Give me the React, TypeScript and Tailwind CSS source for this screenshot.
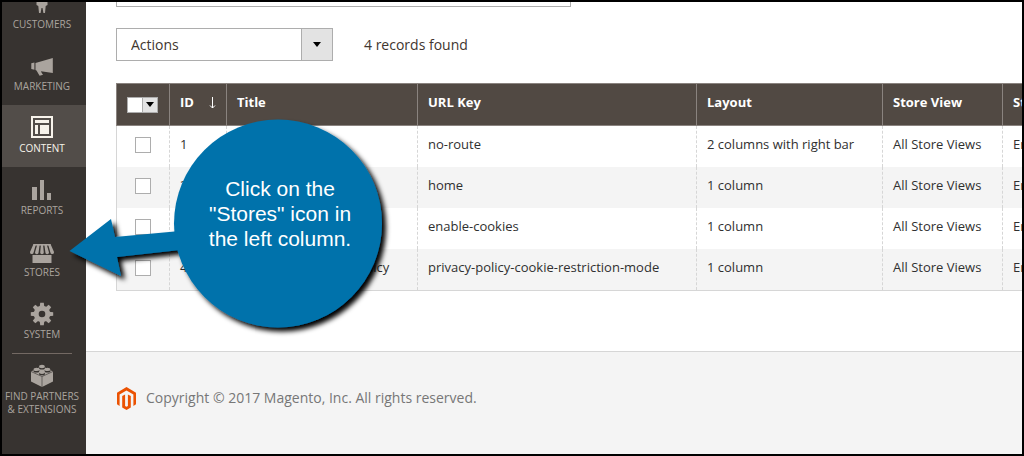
import { FC, ReactNode } from 'react';

type MenuItem = {
  label: ReactNode;
  id: string;
  icon: ReactNode;
  active?: boolean;
};

type Page = {
  id: number;
  title: string;
  urlKey: string;
  layout: string;
};

const GEAR_TEETH = [0, 45, 90, 135, 180, 225, 270, 315];

const MENU: MenuItem[] = [
  {
    id: 'marketing',
    label: 'MARKETING',
    icon: <path d="M21.800 4v15L10 17.300l.5 1.200 1.500 2.300-3.400.9L5.500 16.500 4.500 16V9zM.3 9.300L3.400 8.600v7.200L.3 15z" />,
  },
  {
    id: 'content',
    label: 'CONTENT',
    active: true,
    icon: (
      <path
        fillRule="evenodd"
        d="M0 0h22v22H0zM2 2v18h18V2zM4 4h14v3H4zM4 9h3v9H4zM9 9h9v9H9z"
      />
    ),
  },
  {
    id: 'reports',
    label: 'REPORTS',
    icon: <path d="M1 9h5v13H1zM9 2h4v20H9zM16 15h4v7h-4z" />,
  },
  {
    id: 'stores',
    label: 'STORES',
    icon: (
      <>
        <path d="M2.500 4h17v1.600h-17z" />
        <path d="M2.500 4H5L2.600 12.500a1.800 1.800 0 0 1-3.600-.6zM6.400 4h2.300L7.600 12.500a1.800 1.800 0 0 1-3.600 0zM10 4h2l.8 8.500a1.800 1.800 0 0 1-3.600 0zM13.300 4h2.300L18 12.500a1.800 1.800 0 0 1-3.600 0zM17 4h2.500L23 11.900a1.800 1.800 0 0 1-3.600.6z" />
        <path d="M1.500 15h19v8h-19z" />
      </>
    ),
  },
  {
    id: 'system',
    label: 'SYSTEM',
    icon: (
      <>
        <circle cx="11" cy="12" r="5.800" fill="none" stroke="currentColor" strokeWidth="5" />
        {GEAR_TEETH.map(angle => (
          <path key={angle} d="M8.700 5l.5-4.200h3.600l.5 4.200z" transform={`rotate(${angle} 11 12)`} />
        ))}
      </>
    ),
  },
  {
    id: 'partners',
    label: (
      <>
        FIND PARTNERS
        <br />
        &amp; EXTENSIONS
      </>
    ),
    icon: (
      <>
        <path d="M0 7.500L11 2l11 5.500v10L11 23 0 17.500z" />
        <path d="M0 7.500l11 5 11-5M11 12.500V23" fill="none" stroke="#373330" strokeWidth="0.600" />
        <g fill="#373330">
          <ellipse cx="11" cy="4" rx="3" ry="1.600" />
          <ellipse cx="5.500" cy="6.900" rx="3" ry="1.600" />
          <ellipse cx="16.500" cy="6.900" rx="3" ry="1.600" />
          <ellipse cx="11" cy="9.700" rx="3" ry="1.600" />
        </g>
        <ellipse cx="11" cy="2.500" rx="2.900" ry="1.700" />
        <ellipse cx="5.500" cy="5.400" rx="2.900" ry="1.700" />
        <ellipse cx="16.500" cy="5.400" rx="2.900" ry="1.700" />
        <ellipse cx="11" cy="8.200" rx="2.900" ry="1.700" />
      </>
    ),
  },
];

const PAGES: Page[] = [
  { id: 1, title: '404 Not Found', urlKey: 'no-route', layout: '2 columns with right bar' },
  { id: 2, title: 'Home Page', urlKey: 'home', layout: '1 column' },
  { id: 3, title: 'Enable Cookies', urlKey: 'enable-cookies', layout: '1 column' },
  {
    id: 4,
    title: 'Privacy and Cookie Policy',
    urlKey: 'privacy-policy-cookie-restriction-mode',
    layout: '1 column',
  },
];

const TH = 'h-[43px] border-y border-l border-[#8a837f] bg-[#514943] px-2.5 pb-1 text-left font-bold text-white';
const TD = 'h-[41px] border-l border-dashed border-[#d6d6d6] px-2.5 pb-1';

const Sidebar: FC = () => (
  <nav className="w-[84px] shrink-0 bg-[#373330] text-center text-[10px] leading-[13px] text-[#aaa49e]">
    {/* scrolled item, only the lower part of the icon shows */}
    <a
      href="#customers"
      className="flex h-[41px] flex-col items-center justify-end overflow-hidden pb-3 pr-1"
    >
      <svg className="mb-1 h-3 w-[22px] shrink-0" viewBox="0 0 22 12" fill="currentColor">
        <path d="M5.500 0h11v3l-1.800 1L14 11h-1.600L11.500 6h-1L9.600 11H8L7.300 4 5.500 3z" />
      </svg>
      CUSTOMERS
    </a>
    {MENU.map(item => (
      <div key={item.id} className="relative">
        {item.id === 'partners' && (
          <hr className="absolute inset-x-2.5 top-0 mr-1 border-[#736963]" />
        )}
        <a
          href={`#${item.id}`}
          className={`flex min-h-[62px] flex-col items-center gap-[3px] whitespace-nowrap pr-1 pt-[11px] ${
            item.active ? 'bg-[#524d49] text-[#f7f3eb]' : ''
          }`}
        >
          <svg className="h-[23px] w-[22px] overflow-visible" viewBox="0 0 22 23" fill="currentColor">
            {item.icon}
          </svg>
          <span>{item.label}</span>
        </a>
      </div>
    ))}
  </nav>
);

const PagesTable: FC = () => (
  <table className="w-full table-fixed border-separate border-spacing-0 whitespace-nowrap border-b border-[#d6d6d6] text-[13px] text-[#303030]">
    <colgroup>
      <col className="w-[53px]" />
      <col className="w-[57px]" />
      <col className="w-[191px]" />
      <col className="w-[279px]" />
      <col className="w-[186px]" />
      <col className="w-[120px]" />
      <col />
    </colgroup>
    <thead>
      <tr>
        <th className={TH}>
          <button
            aria-label="Select rows"
            className="mt-1 flex h-4 w-[31px] border border-[#adadad] bg-white"
          >
            <span className="ml-auto flex h-full w-[15px] items-center justify-center border-l border-[#adadad] bg-[#e3e3e3]">
              <svg className="h-[5px] w-2" viewBox="0 0 8 5">
                <path d="M0 0h8L4 5z" />
              </svg>
            </span>
          </button>
        </th>
        <th className={TH}>
          <span className="flex items-center justify-between">
            ID
            <svg className="h-3 w-[7px]" viewBox="0 0 7 12" fill="none" stroke="currentColor">
              <path d="M3.500 0v11M1 8.500L3.500 11 6 8.500" />
            </svg>
          </span>
        </th>
        <th className={TH}>Title</th>
        <th className={TH}>URL Key</th>
        <th className={TH}>Layout</th>
        <th className={TH}>Store View</th>
        <th className={TH}>Status</th>
      </tr>
    </thead>
    <tbody>
      {PAGES.map(page => (
        <tr key={page.id} className="even:bg-[#f4f4f4]">
          <td className="h-[41px] border-l border-[#d6d6d6] pb-1">
            <input
              type="checkbox"
              aria-label={`Select ${page.title}`}
              className="mx-auto block size-4 appearance-none border border-[#adadad] bg-white"
            />
          </td>
          <td className={TD}>{page.id}</td>
          <td className={TD}>{page.title}</td>
          <td className={TD}>{page.urlKey}</td>
          <td className={TD}>{page.layout}</td>
          <td className={TD}>All Store Views</td>
          <td className={TD}>Enabled</td>
        </tr>
      ))}
    </tbody>
  </table>
);

const Callout: FC = () => (
  <div className="pointer-events-none absolute left-[58px] top-[108px] h-[230px] w-[340px]">
    <svg className="size-full overflow-visible" viewBox="60 110 340 230">
      <defs>
        <filter id="callout-shadow" x="-10%" y="-10%" width="125%" height="125%">
          <feDropShadow dx="4" dy="4" stdDeviation="2.500" floodColor="#000" floodOpacity="1" />
        </filter>
      </defs>
      <g fill="#0072ab" filter="url(#callout-shadow)">
        <circle cx="278" cy="223.500" r="104" />
        <path d="M69.500 251L111 219l4 18 65-6v19l-63 7 4 19z" />
      </g>
    </svg>
    <p className="absolute inset-x-0 top-[66px] pl-[100px] text-center font-['Liberation_Sans',sans-serif] text-[21px] leading-[25px] text-white">
      Click on the
      <br />
      "Stores" icon in
      <br />
      the left column.
    </p>
  </div>
);

const App: FC = () => {
  return (
    <div className="relative flex min-h-screen overflow-hidden border-2 border-black bg-white font-['Open_Sans',sans-serif]">
      <Sidebar />
      <main className="flex min-w-0 flex-1 flex-col overflow-hidden">
        <div className="pl-[30px]">
          <div className="h-[5px] w-[455px] border-x border-b border-[#adadad]" />
          <div className="mt-[21px] flex items-center gap-[31px] text-sm text-[#41362f]">
            <div className="relative w-[217px]">
              <select
                aria-label="Actions"
                className="block h-[33px] w-full appearance-none border border-[#adadad] bg-white pl-3.5"
              >
                <option>Actions</option>
              </select>
              <span className="pointer-events-none absolute inset-y-0 right-0 flex w-8 items-center justify-center border border-[#adadad] bg-[#e3e3e3]">
                <svg className="h-[5px] w-2" viewBox="0 0 8 5">
                  <path d="M0 0h8L4 5z" />
                </svg>
              </span>
            </div>
            <span>4 records found</span>
          </div>
          <div className="mt-[22px]">
            <PagesTable />
          </div>
        </div>
        <footer className="mt-[60px] flex flex-1 items-start gap-2.5 border-t border-[#d6d6d6] bg-[#f4f4f4] pl-[30px] pt-[35px] text-sm leading-[22px] text-[#777]">
          <svg className="h-[23px] w-5" viewBox="0 0 20 23" fill="#eb5202">
            <path d="M10.500 0L20 5.800v11.500l-2.600 1.700V7.500l-6.900-4.100-6.900 4.100V19L1 17.300V5.800z" />
            <path d="M6.200 9.100l2.900-1.700v11.500l1.400.9 1.400-.9V7.400l2.900 1.700v11.500L10.500 23l-4.300-2.400z" />
          </svg>
          <span>Copyright © 2017 Magento, Inc. All rights reserved.</span>
        </footer>
      </main>
      <Callout />
    </div>
  );
};

export default App;
